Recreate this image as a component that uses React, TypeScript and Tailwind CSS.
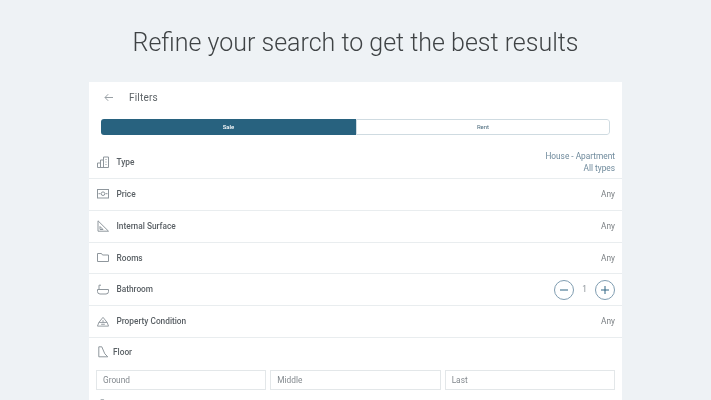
import React from "react";

const P = { fill: "none", stroke: "#8f979d", strokeWidth: 1 } as const;

const TypeIcon = () => (
  <svg width="12" height="12" viewBox="0 0 12 12" {...P}>
    <path d="M.5 11.500V7h3V4h3v-3h5v10.500z" />
    <path d="M3.500 7v4.500M6.500 4v7.500M8.500 3.500h1M8.500 6h1M8.500 8.500h1" />
  </svg>
);
const PriceIcon = () => (
  <svg width="12" height="10" viewBox="0 0 12 10" {...P}>
    <rect x=".5" y=".5" width="11" height="8.500" />
    <circle cx="6" cy="4.700" r="1.800" />
    <path d="M1.500 4.700h2M8.500 4.700h2" />
  </svg>
);
const SurfaceIcon = () => (
  <svg width="12" height="12" viewBox="0 0 12 12" {...P}>
    <path d="M1 .8v10.400h10.500z" />
    <path d="M3 6.500v3h3z" />
  </svg>
);
const RoomsIcon = () => (
  <svg width="12" height="9" viewBox="0 0 12 9" {...P}>
    <path d="M.5 8.500V.5h4l1 1.500h6v6.500z" />
  </svg>
);
const BathIcon = () => (
  <svg width="12" height="11" viewBox="0 0 12 11" {...P}>
    <path d="M.5 5.500h11v2a2.500 2.500 0 0 1-2.500 2.500H3a2.500 2.500 0 0 1-2.500-2.500z" />
    <path d="M2 5.500V1.200h2" />
  </svg>
);
const ConditionIcon = () => (
  <svg width="13" height="11" viewBox="0 0 13 11" {...P}>
    <path d="M2 6.500 6.500 1 11 6.500M.5 10.500l1.500-4h9l1.500 4z" />
    <path d="M6.500 4v2.500M4.500 8.500h4" />
  </svg>
);
const FloorIcon = () => (
  <svg width="11" height="12" viewBox="0 0 11 12" {...P}>
    <path d="M.8.800h3l3 7 3 3H.8z" />
  </svg>
);

const Row = ({
  icon,
  label,
  right,
}: {
  icon: React.ReactNode;
  label: string;
  right?: React.ReactNode;
}) => (
  <div className="shrink-0 flex items-center h-[31.750px] pl-[8px] pr-[7px] border-b border-[#e9edef]">
    <div className="w-[12px] flex justify-center">{icon}</div>
    <span className="ml-[7.500px] text-[8.300px] font-medium text-[#5a6065]">{label}</span>
    <div className="ml-auto text-[8.300px] text-[#7a7f83]">{right ?? "Any"}</div>
  </div>
);

const Round = ({ children }: { children: React.ReactNode }) => (
  <div className="w-[20px] h-[20px] rounded-full border border-[#7f9db1] flex items-center justify-center">
    {children}
  </div>
);

const Field = ({ label }: { label: string }) => (
  <div className="flex-1 h-[20px] border border-[#e3e7e9] flex items-center pl-[6px] text-[8.300px] text-[#83898e]">
    {label}
  </div>
);

export default function App() {
  return (
    <div
      className="w-[711px] h-[400px] overflow-hidden bg-[#eef2f5] flex flex-col items-center"
      style={{ fontFamily: "Roboto, sans-serif" }}
    >
      <h1 className="mt-[28px] h-[30px] leading-[30px] text-[25px] font-light text-[#3f4345] whitespace-nowrap blur-[0.3px]">
        Refine your search to get the best results
      </h1>
      <div className="mt-[24px] w-[533px] flex-1 bg-white flex flex-col overflow-hidden blur-[0.4px]">
        <div className="shrink-0 flex items-center h-[31px] pl-[15px] pt-[0.500px]">
          <svg width="9" height="9" viewBox="0 0 9 9" fill="none" stroke="#9aa1a6" strokeWidth="1">
            <path d="M9 4.500H1M4.200 1.200 1 4.500l3.200 3.300" />
          </svg>
          <span className="ml-[16px] text-[10px] tracking-[0.2px] text-[#5d6367]">Filters</span>
        </div>
        <div className="shrink-0 ml-[12px] mr-[12px] mt-[5.500px] h-[16.500px] flex text-[6px] rounded-[3px] overflow-hidden">
          <div className="w-[255px] bg-[#28627f] text-white flex items-center justify-center font-medium">Sale</div>
          <div className="flex-1 border border-[#cfdbe1] rounded-r-[3px] text-[#4b6a7c] flex items-center justify-center">
            Rent
          </div>
        </div>
        <div className="shrink-0 mt-[10.500px] flex items-center h-[33.500px] pl-[8px] pr-[7px] border-b border-[#e9edef]">
          <div className="w-[12px] flex justify-center"><TypeIcon /></div>
          <span className="ml-[7.500px] text-[8.300px] font-medium text-[#5a6065]">Type</span>
          <div className="ml-auto text-right text-[8.300px] leading-[12px] text-[#6f8a9c]">
            <div>House - Apartment</div>
            <div>All types</div>
          </div>
        </div>
        <Row icon={<PriceIcon />} label="Price" />
        <Row icon={<SurfaceIcon />} label="Internal Surface" />
        <Row icon={<RoomsIcon />} label="Rooms" />
        <Row
          icon={<BathIcon />}
          label="Bathroom"
          right={
            <div className="flex items-center">
              <Round>
                <svg width="8" height="8" viewBox="0 0 8 8" stroke="#2f6583" strokeWidth="1"><path d="M0 4h8" /></svg>
              </Round>
              <span className="w-[21px] text-center text-[#8a9197]">1</span>
              <Round>
                <svg width="8" height="8" viewBox="0 0 8 8" stroke="#2f6583" strokeWidth="1"><path d="M0 4h8M4 0v8" /></svg>
              </Round>
            </div>
          }
        />
        <Row icon={<ConditionIcon />} label="Property Condition" />
        <div className="shrink-0 flex items-center h-[28px] pl-[9px]">
          <FloorIcon />
          <span className="ml-[4px] text-[8.300px] font-medium text-[#5a6065]">Floor</span>
        </div>
        <div className="shrink-0 mt-[4.500px] ml-[7px] mr-[7px] flex gap-[4px]">
          <Field label="Ground" />
          <Field label="Middle" />
          <Field label="Last" />
        </div>
        <div className="shrink-0 mt-[8.500px] ml-[11px]">
          <FloorIcon />
        </div>
      </div>
    </div>
  );
}
